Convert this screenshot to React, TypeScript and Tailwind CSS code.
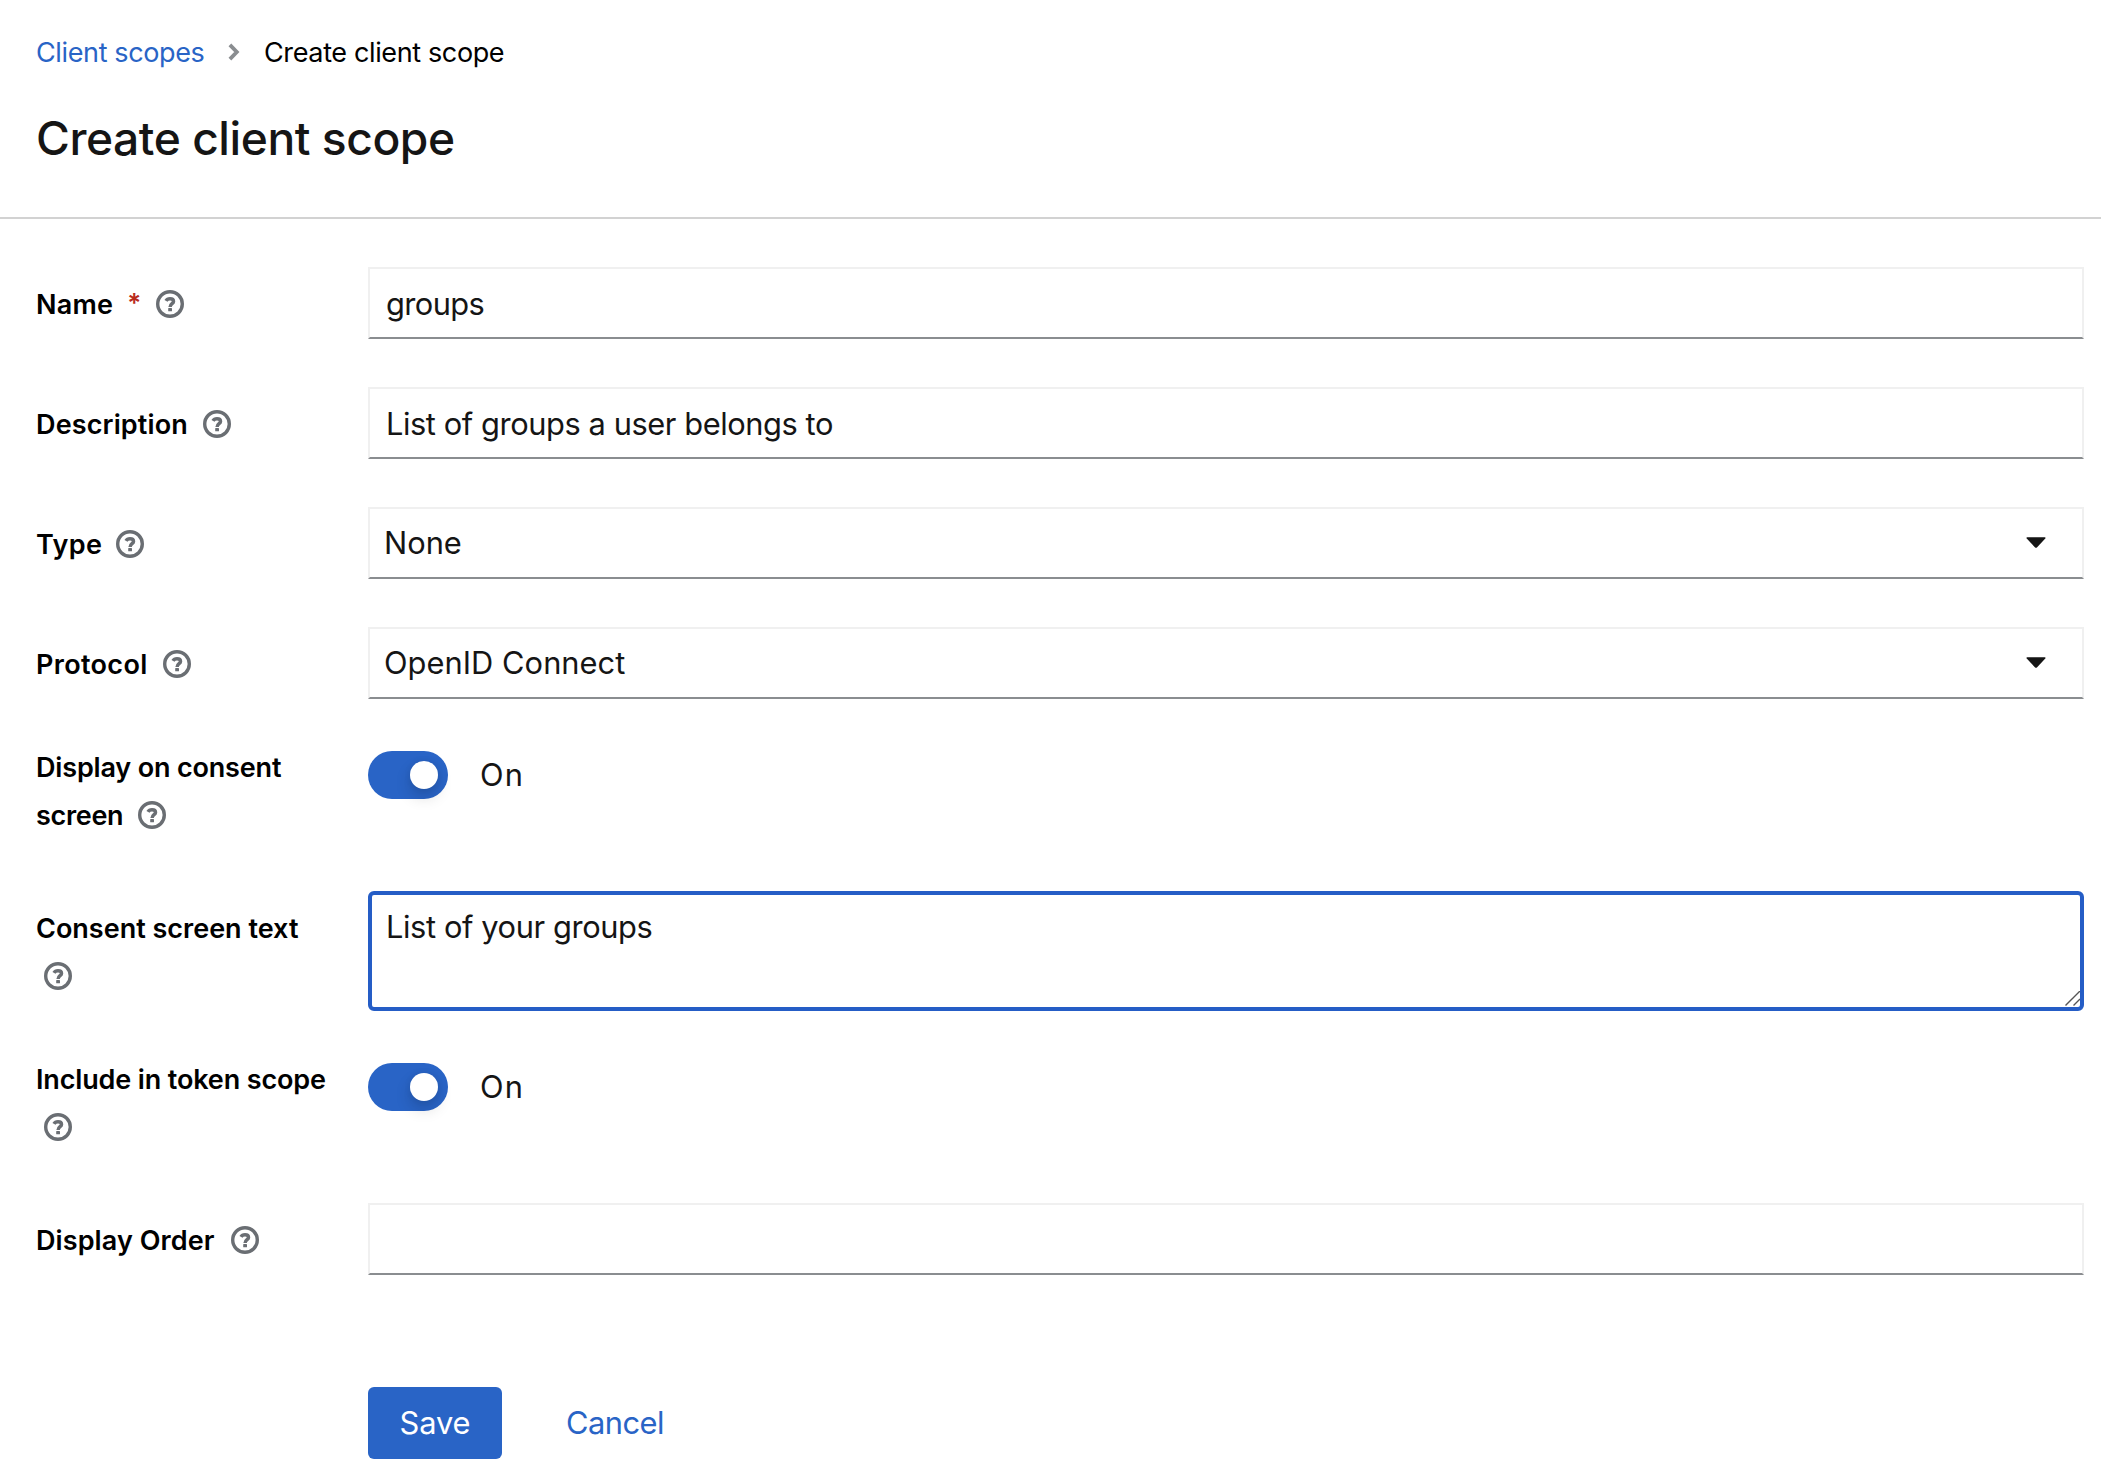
import type { ReactNode } from "react";

function HelpIcon() {
  return (
    <svg viewBox="0 0 28 28" fill="none" className="size-7 shrink-0 text-[#6a6e73]">
      <circle cx="14" cy="14" r="12.3" stroke="currentColor" strokeWidth="3.4" />
      <path
        d="M10 10.9C10.8 9.4 12.1 8.8 14 8.8C16.2 8.8 17.5 9.8 17.5 11.4C17.5 13.8 14.1 13.6 14.1 17"
        stroke="currentColor"
        strokeWidth="3.5"
      />
      <rect x="12.2" y="18" width="3.8" height="3.3" rx="0.6" fill="currentColor" />
    </svg>
  );
}

function Caret() {
  return (
    <svg viewBox="0 0 20 12" className="h-3 w-5 text-[#151515]">
      <path
        d="M1.3 0.2H18.7C19.6 0.2 19.9 1 19.3 1.6L10.9 10.4C10.3 11 9.7 11 9.1 10.4L0.7 1.6C0.1 1 0.4 0.2 1.3 0.2Z"
        fill="currentColor"
      />
    </svg>
  );
}

function Label({ children }: { children: ReactNode }) {
  return (
    <div className="flex w-[332px] shrink-0 flex-col text-[27px] font-semibold leading-[48px] whitespace-nowrap text-black">
      {children}
    </div>
  );
}

function Field({ children, className = "" }: { children?: ReactNode; className?: string }) {
  return (
    <div
      className={`flex h-[72px] grow items-center border-2 border-[#f0f0f0] border-b-[#8a8d90] pl-4 text-[30.8px] text-[#151515] ${className}`}
    >
      {children}
    </div>
  );
}

function Select({ children }: { children: ReactNode }) {
  return (
    <div className="flex h-[72px] grow items-center justify-between border-2 border-[#f0f0f0] border-b-[#8a8d90] pr-9 pl-3.5 text-[30.8px] text-[#151515]">
      {children}
      <Caret />
    </div>
  );
}

function Switch() {
  return (
    <div className="mt-2 flex h-12 items-center gap-8 text-[30.8px] text-[#151515]">
      <div className="flex h-12 w-20 items-center justify-end rounded-full bg-[#2964c6] pr-2.5">
        <div className="size-7 rounded-full bg-white shadow-[0_8px_16px_rgba(3,3,3,0.16),0_0_6px_rgba(3,3,3,0.08)]" />
      </div>
      <span className="tracking-[1.2px]">On</span>
    </div>
  );
}

export default function App() {
  return (
    <div className="h-[1483px] w-[2101px] overflow-hidden bg-white font-['Inter',sans-serif]">
      <header className="h-[219px] border-b-2 border-[#d2d2d2] pt-[31px] pl-9">
        <nav className="flex h-[42px] items-center text-[27px]">
          <a className="w-[192px] translate-y-px tracking-[-0.37px] text-[#2964c6]">Client scopes</a>
          <svg viewBox="0 0 12 18" fill="none" className="h-[18px] w-3 text-[#8a8d90]">
            <path d="M1.9 1.9L8.8 9L1.9 16.1" stroke="currentColor" strokeWidth="3.8" />
          </svg>
          <span className="ml-6 translate-y-px tracking-[-0.37px] text-black">Create client scope</span>
        </nav>
        <h1 className="mt-[35px] text-[46.2px] leading-[60px] font-medium tracking-[-0.46px] text-[#151515]">
          Create client scope
        </h1>
      </header>

      <form className="flex flex-col pt-12 pr-[17px] pl-9">
        <div className="flex">
          <Label>
            <div className="mt-[13px] flex items-center">
              <span className="translate-y-px tracking-[0.26px]">Name</span>
              <span className="ml-3.5 w-[13px] -translate-y-px text-[26px] font-semibold text-[#b92b1c]">*</span>
              <span className="ml-4">
                <HelpIcon />
              </span>
            </div>
          </Label>
          <Field className="pt-0.5">
            <span className="tracking-[-0.58px]">groups</span>
          </Field>
        </div>

        <div className="mt-12 flex">
          <Label>
            <div className="mt-[13px] flex items-center gap-[15px]">
              <span className="translate-y-px tracking-[0.13px]">Description</span>
              <HelpIcon />
            </div>
          </Label>
          <Field className="pt-0.5">
            <span className="tracking-[-0.42px]">List of groups a user belongs to</span>
          </Field>
        </div>

        <div className="mt-12 flex">
          <Label>
            <div className="mt-[13px] flex items-center gap-3.5">
              <span className="translate-y-px tracking-[0.4px]">Type</span>
              <HelpIcon />
            </div>
          </Label>
          <Select>
            <span>None</span>
          </Select>
        </div>

        <div className="mt-12 flex">
          <Label>
            <div className="mt-[13px] flex items-center gap-[15px]">
              <span className="translate-y-px tracking-[0.33px]">Protocol</span>
              <HelpIcon />
            </div>
          </Label>
          <Select>
            <span className="tracking-[0.05px]">OpenID Connect</span>
          </Select>
        </div>

        <div className="mt-11 flex">
          <Label>
            <span className="translate-y-px tracking-[-0.17px]">Display on consent</span>
            <div className="flex items-center gap-[15px]">
              <span className="translate-y-px tracking-[-0.3px]">screen</span>
              <HelpIcon />
            </div>
          </Label>
          <Switch />
        </div>

        <div className="mt-[52px] flex">
          <Label>
            <span className="mt-[13px] translate-y-px tracking-[0px]">Consent screen text</span>
            <div className="flex h-12 items-center pl-2">
              <HelpIcon />
            </div>
          </Label>
          <div className="relative h-[120px] grow rounded-md border-4 border-[#255dc6] pt-2 pl-3.5 text-[30.8px] leading-[48px] text-[#151515]">
            <span className="tracking-[-0.39px]">List of your groups</span>
            <svg viewBox="0 0 15 15" fill="none" className="absolute right-0 bottom-px size-[15px]">
              <path d="M0.5 14.5L15 0M8.5 14.5L15 8" stroke="#555" strokeWidth="1.4" />
            </svg>
          </div>
        </div>

        <div className="mt-11 flex">
          <Label>
            <span className="translate-y-px tracking-[-0.14px]">Include in token scope</span>
            <div className="flex h-12 items-center pl-2">
              <HelpIcon />
            </div>
          </Label>
          <Switch />
        </div>

        <div className="mt-[52px] flex">
          <Label>
            <div className="mt-[13px] flex items-center gap-4">
              <span className="translate-y-px tracking-[0.09px]">Display Order</span>
              <HelpIcon />
            </div>
          </Label>
          <Field />
        </div>

        <div className="mt-28 ml-[332px] flex h-[72px] items-center text-[30.8px]">
          <button type="button" className="h-[72px] w-[134px] rounded-md bg-[#2964c6] tracking-[-0.1px] text-white">
            Save
          </button>
          <button type="button" className="ml-16 tracking-[-0.5px] text-[#2964c6]">
            Cancel
          </button>
        </div>
      </form>
    </div>
  );
}
